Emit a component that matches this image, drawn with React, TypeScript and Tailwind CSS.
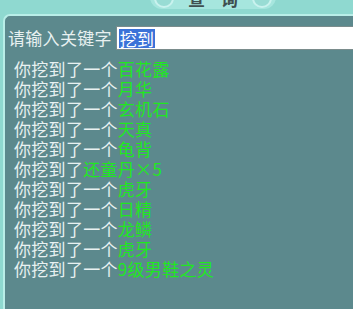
import React from 'react';

const items = [
  { prefix: '你挖到了一个', name: '百花露' },
  { prefix: '你挖到了一个', name: '月华' },
  { prefix: '你挖到了一个', name: '玄机石' },
  { prefix: '你挖到了一个', name: '天真' },
  { prefix: '你挖到了一个', name: '龟背' },
  { prefix: '你挖到了', name: '还童丹×5' },
  { prefix: '你挖到了一个', name: '虎牙' },
  { prefix: '你挖到了一个', name: '日精' },
  { prefix: '你挖到了一个', name: '龙鳞' },
  { prefix: '你挖到了一个', name: '虎牙' },
  { prefix: '你挖到了一个', name: '9级男鞋之灵' },
];

const font = { fontFamily: '"Noto Sans CJK SC", "Noto Sans", sans-serif' };

export default function App() {
  return (
    <div className="w-[353px] h-[309px] overflow-hidden bg-[#8fd9d0] flex flex-col" style={font}>
      {/* Tab header (cut off at top) */}
      <div className="h-[14px] flex">
        <div className="ml-[150px] -mt-[14px] w-[126px] h-[23px] rounded-b-[12px] bg-[#a6e6de] flex items-end justify-between px-[4px] pb-[1px]">
          <div className="w-[20px] h-[20px] rounded-full border-2 border-[#c9f2ee] bg-[#98dcd4]" />
          <div className="flex gap-[16px] text-[17px] leading-[17px] font-bold text-[#3f4f4f] mb-[1px]">
            <span>查</span>
            <span>询</span>
          </div>
          <div className="w-[20px] h-[20px] rounded-full border-2 border-[#c9f2ee] bg-[#98dcd4]" />
        </div>
      </div>

      {/* Panel */}
      <div className="flex-1 ml-[3px] rounded-tl-[7px] border-l-2 border-t-2 border-[#b9eee8] bg-[#5c898d]">
        <div className="flex items-center mt-[10px] h-[24px]">
          <span className="ml-[3px] text-[17px] tracking-[0.3px] leading-[20px] text-[#e8f1f1]">请输入关键字</span>
          <div className="ml-[4px] flex-1 h-[24px] bg-white border border-[#7a8c8c] border-r-0 flex items-center pl-[2px]">
            <span className="bg-[#3b72d8] text-white text-[17px] leading-[19px] tracking-[0.3px] px-[1px]">挖到</span>
          </div>
        </div>
        <div className="mt-[9px] ml-[9px] text-[17px] leading-[20px] tracking-[0.3px] text-[#e8f1f1]">
          {items.map((it, i) => (
            <div key={i} className="whitespace-nowrap">
              {it.prefix}
              <span className="text-[#1fe81f]">{it.name}</span>
            </div>
          ))}
        </div>
      </div>
    </div>
  );
}
